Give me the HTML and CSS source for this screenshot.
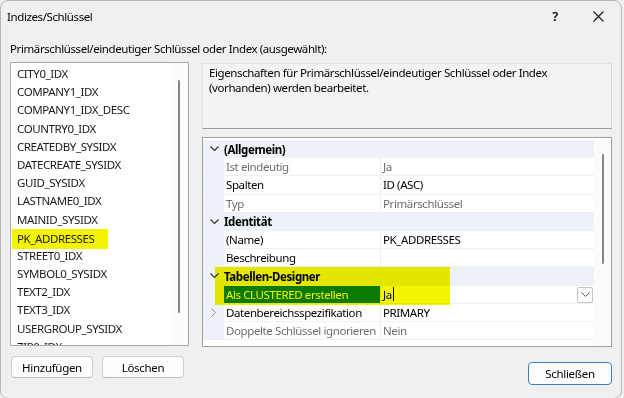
FILE: index.html
```html
<!DOCTYPE html>
<html lang="de">
<head>
<meta charset="utf-8">
<title>Indizes/Schlüssel</title>
<link rel="stylesheet" href="styles.css">
</head>
<body>
<div class="dialog">
  <div class="titlebar">
    <span class="title">Indizes/Schlüssel</span>
    <span class="tb-help">?</span>
    <span class="tb-close"><svg width="11" height="11" viewBox="0 0 11 11"><path d="M0.5 0.5 L10.5 10.5 M10.5 0.5 L0.5 10.5" stroke="#1a1a1a" stroke-width="1.1" fill="none"/></svg></span>
  </div>
  <div class="content">
    <div class="label">Primärschlüssel/eindeutiger Schlüssel oder Index (ausgewählt):</div>
    <div class="columns">
      <div class="leftcol">
        <div class="listbox">
          <ul class="items">
            <li>CITY0_IDX</li>
            <li>COMPANY1_IDX</li>
            <li>COMPANY1_IDX_DESC</li>
            <li>COUNTRY0_IDX</li>
            <li>CREATEDBY_SYSIDX</li>
            <li>DATECREATE_SYSIDX</li>
            <li>GUID_SYSIDX</li>
            <li>LASTNAME0_IDX</li>
            <li>MAINID_SYSIDX</li>
            <li><span class="mark">PK_ADDRESSES</span></li>
            <li>STREET0_IDX</li>
            <li>SYMBOL0_SYSIDX</li>
            <li>TEXT2_IDX</li>
            <li>TEXT3_IDX</li>
            <li>USERGROUP_SYSIDX</li>
            <li>ZIP0_IDX</li>
          </ul>
          <div class="vscroll"><div class="thumb list-thumb"></div></div>
        </div>
        <div class="leftbtns">
          <button class="btn">Hinzufügen</button>
          <button class="btn">Löschen</button>
        </div>
      </div>
      <div class="rightcol">
        <div class="desc">Eigenschaften für Primärschlüssel/eindeutiger Schlüssel oder Index (vorhanden) werden bearbeitet.</div>
        <div class="grid">
          <div class="rows">
            <div class="row cat"><span class="chev"><svg width="9" height="6" viewBox="0 0 9 6"><path d="M0.5 0.5 L4.5 4.5 L8.5 0.5" stroke="#333" stroke-width="1.2" fill="none"/></svg></span><span class="catname">(Allgemein)</span></div>
            <div class="row prop dim"><span class="gut"></span><span class="name">Ist eindeutig</span><span class="val">Ja</span></div>
            <div class="row prop"><span class="gut"></span><span class="name">Spalten</span><span class="val">ID (ASC)</span></div>
            <div class="row prop dim"><span class="gut"></span><span class="name">Typ</span><span class="val">Primärschlüssel</span></div>
            <div class="row cat"><span class="chev"><svg width="9" height="6" viewBox="0 0 9 6"><path d="M0.5 0.5 L4.5 4.5 L8.5 0.5" stroke="#333" stroke-width="1.2" fill="none"/></svg></span><span class="catname">Identität</span></div>
            <div class="row prop"><span class="gut"></span><span class="name">(Name)</span><span class="val">PK_ADDRESSES</span></div>
            <div class="row prop"><span class="gut"></span><span class="name">Beschreibung</span><span class="val"></span></div>
            <div class="row cat"><span class="chev"><svg width="9" height="6" viewBox="0 0 9 6"><path d="M0.5 0.5 L4.5 4.5 L8.5 0.5" stroke="#333" stroke-width="1.2" fill="none"/></svg></span><span class="catname">Tabellen-Designer</span></div>
            <div class="row prop selrow"><span class="gut"></span><span class="name sel">Als CLUSTERED erstellen</span><span class="val editing">Ja<span class="caret"></span><span class="dd"><svg width="9" height="6" viewBox="0 0 9 6"><path d="M0.5 0.5 L4.5 4.5 L8.5 0.5" stroke="#555" stroke-width="1" fill="none"/></svg></span></span></div>
            <div class="row prop"><span class="gut"><svg width="5" height="9" viewBox="0 0 5 9"><path d="M0.5 0.5 L4.5 4.5 L0.5 8.5" stroke="#888" stroke-width="1" fill="none"/></svg></span><span class="name">Datenbereichsspezifikation</span><span class="val">PRIMARY</span></div>
            <div class="row prop dim"><span class="gut"></span><span class="name">Doppelte Schlüssel ignorieren</span><span class="val">Nein</span></div>
          </div>
          <div class="vscroll grid-scroll"><div class="thumb grid-thumb"></div></div>
          <div class="marker"></div>
        </div>
        <div class="rightbtns">
          <button class="btn default">Schließen</button>
        </div>
      </div>
    </div>
  </div>
</div>
</body>
</html>
```
FILE: styles.css
```css
* { box-sizing: border-box; }
html, body { margin: 0; padding: 0; }
body {
  width: 624px;
  height: 398px;
  background: #f0f0f0;
  font-family: "Noto Sans", "Open Sans", sans-serif;
  font-size: 11.5px;
  letter-spacing: -0.4px;
  color: #000;
  overflow: hidden;
}
.dialog {
  width: 622px;
  height: 399px;
  background: #f0f0f0;
  border: 1px solid #b9b9b9;
  border-radius: 8px;
  display: flex;
  flex-direction: column;
}
.titlebar {
  height: 30px;
  display: flex;
  align-items: center;
  padding-left: 6px;
}
.title { flex: 1; }
.tb-help { width: 44px; text-align: center; font-size: 13px; font-weight: 600; }
.tb-close { width: 44px; display: flex; justify-content: center; padding-right: 2px; }
.content { padding: 0 0 0 9px; }
.label { height: 31px; line-height: 18px; padding-top: 9px; }
.columns { display: flex; gap: 13px; }
.leftcol { width: 179px; display: flex; flex-direction: column; }
.listbox {
  height: 284px;
  border: 1px solid #a8a8a8;
  background: #fff;
  display: flex;
  overflow: hidden;
}
.items {
  list-style: none;
  margin: 0;
  padding: 2px 0 0 6px;
  flex: 1;
}
.items li { height: 18.2px; line-height: 18.2px; white-space: nowrap; color: #1a1a1a; }
.mark {
  display: inline-block;
  background: #f4f400;
  margin-left: -5px;
  padding: 1px 14px 1px 5px;
  line-height: 18px;
}
.vscroll { width: 17px; background: #fbfbfb; position: relative; }
.thumb { position: absolute; left: 7px; width: 2px; background: #858585; border-radius: 1px; }
.list-thumb { top: 17px; height: 233px; }
.leftbtns { display: flex; gap: 9px; margin-top: 10px; padding-left: 1px; }
.btn {
  font-family: inherit;
  font-size: 11.5px;
  letter-spacing: -0.3px;
  color: #000;
  width: 82px;
  height: 22px;
  background: #fdfdfd;
  border: 1px solid #cfcfcf;
  border-bottom-color: #bcbcbc;
  border-radius: 4px;
  padding: 0;
}
.rightcol { width: 410px; display: flex; flex-direction: column; }
.desc {
  height: 66px;
  margin-top: 1px;
  padding: 2px 6px;
  line-height: 14.5px;
  border: 1px solid #e2e2e2;
  border-bottom: 1px solid #9a9a9a;
  border-right-color: #d6d6d6;
  background: #f3f3f3;
}
.grid {
  position: relative;
  margin-top: 8px;
  height: 210px;
  border: 1px solid #a0a0a0;
  background: #fff;
  display: flex;
  padding-top: 2px;
}
.rows { flex: 1; }
.row { height: 18.2px; display: flex; align-items: center; white-space: nowrap; }
.cat { background: #eef2f8; font-weight: 700; }
.chev { width: 21px; display: flex; justify-content: center; padding-left: 1px; }
.prop { border-bottom: 1px solid #f0f0f0; }
.gut { width: 21px; align-self: stretch; background: #eef2f8; display: flex; align-items: center; justify-content: center; }
.name { width: 157px; padding-left: 2px; align-self: stretch; display: flex; align-items: center; border-right: 1px solid #ececec; overflow: hidden; }
.val { flex: 1; padding-left: 2px; align-self: stretch; display: flex; align-items: center; position: relative; }
.dim .name, .dim .val { color: #6d6d6d; }
.sel { background: #0a7fd8; color: #fff; }
.caret { display: inline-block; width: 1px; height: 14px; background: #000; margin-left: 1px; }
.dd {
  position: absolute;
  right: 1px;
  top: 1px;
  width: 16px;
  height: 16px;
  border: 1px solid #c4c4c4;
  border-radius: 2px;
  background: #fff;
  display: flex;
  align-items: center;
  justify-content: center;
}
.grid-scroll { width: 17px; background: #fbfbfb; }
.grid-thumb { left: 8px; top: 14px; height: 110px; }
.marker {
  position: absolute;
  left: 12px;
  top: 129px;
  width: 235px;
  height: 38px;
  background: #f4f400;
  mix-blend-mode: multiply;
  pointer-events: none;
}
.rightbtns { display: flex; justify-content: flex-end; margin-top: 15px; }
.btn.default { width: 84px; height: 23px; border: 1.5px solid #3b7fc4; border-radius: 4px; }
```
